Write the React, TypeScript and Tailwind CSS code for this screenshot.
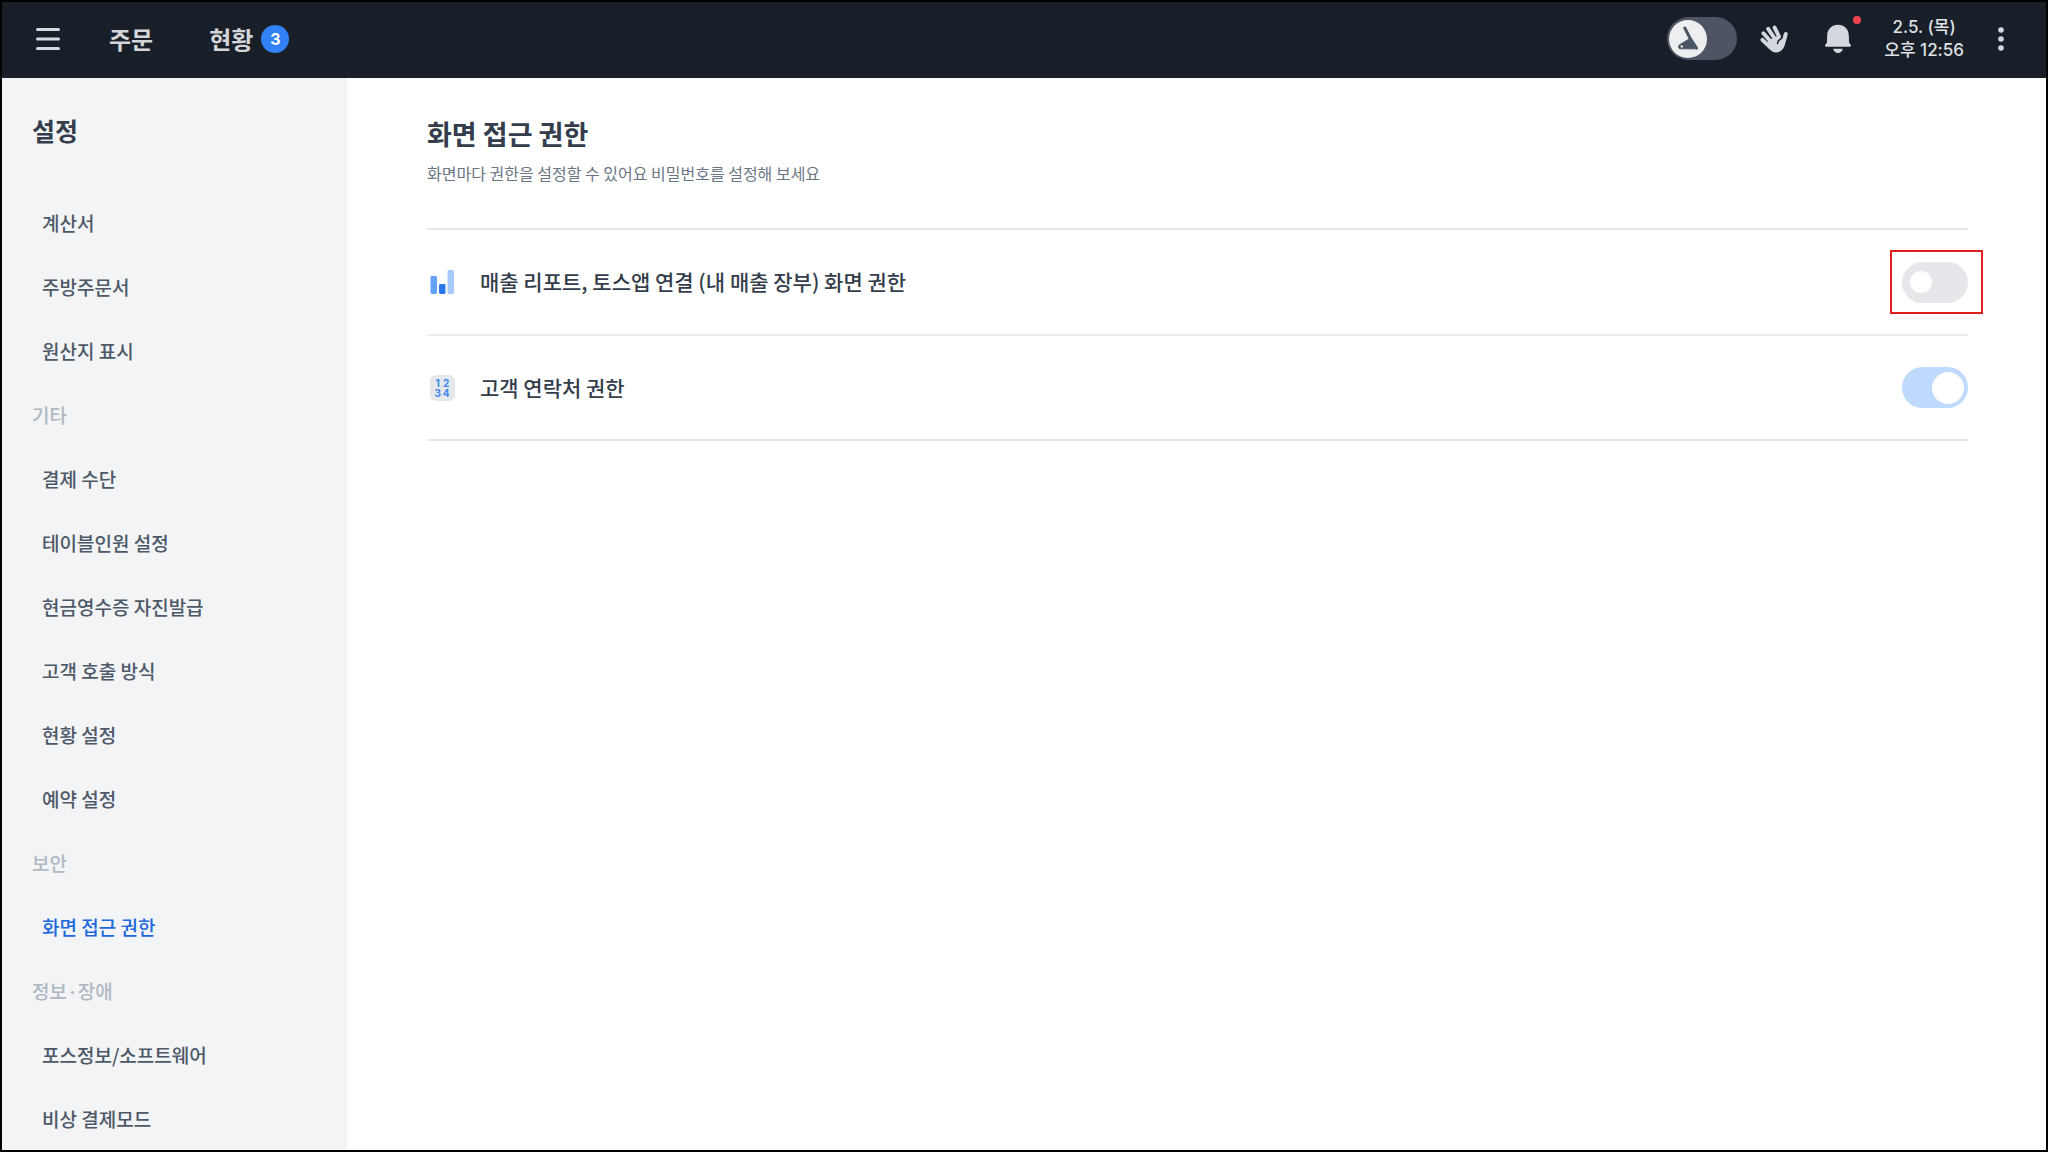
import { useState } from 'react';

type MenuEntry = { label: string; heading?: boolean; active?: boolean };

const MENU: MenuEntry[] = [
  { label: '계산서' },
  { label: '주방주문서' },
  { label: '원산지 표시' },
  { label: '기타', heading: true },
  { label: '결제 수단' },
  { label: '테이블인원 설정' },
  { label: '현금영수증 자진발급' },
  { label: '고객 호출 방식' },
  { label: '현황 설정' },
  { label: '예약 설정' },
  { label: '보안', heading: true },
  { label: '화면 접근 권한', active: true },
  { label: '정보·장애', heading: true },
  { label: '포스정보/소프트웨어' },
  { label: '비상 결제모드' },
];

function MenuIcon() {
  return (
    <svg viewBox="0 0 26 24" className="w-[26px] h-6" fill="#d6dbe2">
      <rect x="1" y="1" width="24" height="3" rx="1.5" />
      <rect x="1" y="10.5" width="24" height="3" rx="1.5" />
      <rect x="1" y="20" width="24" height="3" rx="1.5" />
    </svg>
  );
}

function HandIcon() {
  return (
    <svg viewBox="0 0 30 30" className="w-[30px] h-[30px]" fill="none" stroke="#d3d8df" strokeLinecap="round" strokeLinejoin="round">
      <path d="M3.4 15.800 11 23M4.4 9.2 13 19M9.2 4.800 16 15M15.600 3.600 20 12.500" strokeWidth="3.9" />
      <path d="M26.800 10 24 20" strokeWidth="4" />
      <path d="M10 17 19 12.500 22 16 25.500 15.500 25 20.500C24 25 20.500 28 16.500 27.700 13 27.400 11 25 8.500 21.500Z" fill="#d3d8df" strokeWidth="1.600" />
      <path d="M18.600 19.600C18.600 17.400 19.800 15.800 21.800 15" stroke="#191f28" strokeWidth="1.400" />
    </svg>
  );
}

function BellIcon() {
  return (
    <svg viewBox="0 0 28 30" className="w-7 h-[30px]" fill="#d3d8df">
      <path d="M14 .8C7.800.8 3.400 5.200 3.200 11.200L2.900 18.800 1.400 20.600C.700 21.600 1.200 22.800 2.400 22.800H25.600C26.800 22.800 27.300 21.600 26.600 20.600L25.100 18.800 24.800 11.200C24.600 5.200 20.200.8 14 .8Z" />
      <path d="M9.200 24.800H18.800C18.400 27.400 16.500 29 14 29 11.500 29 9.600 27.400 9.200 24.800Z" />
    </svg>
  );
}

function HornIcon() {
  return (
    <svg viewBox="0 0 38 38" className="w-[38px] h-[38px]">
      <path d="M15.800 8 20.600 17.500 27.500 28" stroke="#4a5563" strokeWidth="3" strokeLinecap="round" fill="none" />
      <path d="M20.200 19 28.600 28.800H11.500C10 28.800 9.400 28 9.700 27L10.200 25Z" fill="#4a5563" stroke="#4a5563" strokeLinejoin="round" />
      <circle cx="12.800" cy="26.400" r="1.200" fill="#eceef0" />
    </svg>
  );
}

function ChartIcon() {
  return (
    <svg viewBox="0 0 30 30" className="w-[30px] h-[30px]">
      <rect x="3.500" y="9" width="6.500" height="18" rx="1.400" fill="#64a2fa" />
      <rect x="12" y="17" width="6.500" height="10" rx="1.400" fill="#2a78ea" />
      <rect x="20.500" y="3" width="6.500" height="24" rx="1.400" fill="#a9cbfb" />
    </svg>
  );
}

function NumbersIcon() {
  return (
    <span className="flex w-[30px] justify-center">
      <span className="grid h-[26px] w-[25px] grid-cols-2 content-center justify-items-center rounded-md bg-[#e5e8eb] px-1 font-[Inter,sans-serif] text-[10px] leading-[10px] font-bold text-[#3b86f0]">
        <span>1</span>
        <span>2</span>
        <span>3</span>
        <span>4</span>
      </span>
    </span>
  );
}

function Header() {
  const [soundOn, setSoundOn] = useState(false);

  return (
    <header className="flex h-[76px] shrink-0 items-center bg-[#191f28] pb-[3px] pl-[33px] pr-10 text-[#d3d5d9]">
      <button aria-label="메뉴">
        <MenuIcon />
      </button>
      <nav className="ml-12 flex items-center gap-14 text-2xl font-bold">
        <a href="#order">주문</a>
        <a href="#status" className="flex items-center gap-2">
          현황
          <span className="flex size-7 items-center justify-center rounded-full bg-[#3182f6] font-[Inter,sans-serif] text-base font-bold text-white">3</span>
        </a>
      </nav>

      <div className="ml-auto flex items-center">
        <label className="relative flex h-[43px] w-[70px] cursor-pointer items-center rounded-full bg-[#4e5463] px-0.5">
          <input
            type="checkbox"
            aria-label="알림음"
            className="peer sr-only"
            checked={soundOn}
            onChange={(e) => setSoundOn(e.target.checked)}
          />
          <span className="rounded-full bg-[#eceef0] peer-checked:ml-auto">
            <HornIcon />
          </span>
        </label>
        <button aria-label="직원 호출" className="ml-[22px]">
          <HandIcon />
        </button>
        <button aria-label="알림" className="relative ml-[35px]">
          <BellIcon />
          <span className="absolute -top-2 -right-[9px] size-2 rounded-full bg-[#f04452]" />
        </button>
        <p className="ml-8 text-center font-[Inter,'Noto_Sans_CJK_KR',sans-serif] text-[17px] leading-[23px] font-medium text-[#dfe1e4]">
          2.5. (목)
          <br />
          오후 12:56
        </p>
        <button aria-label="더보기" className="ml-8">
          <svg viewBox="0 0 10 26" className="w-2.5 h-[26px]" fill="#d3d8df">
            <circle cx="5" cy="4" r="2.800" />
            <circle cx="5" cy="13" r="2.800" />
            <circle cx="5" cy="22" r="2.800" />
          </svg>
        </button>
      </div>
    </header>
  );
}

function Sidebar() {
  return (
    <aside className="w-[345px] shrink-0 overflow-hidden bg-[#f2f4f6]">
      <h2 className="pt-[34px] pl-[30px] text-[25px] leading-9 font-bold text-[#333d4b]">설정</h2>
      <ul className="mt-[43px] text-[19px] font-medium">
        {MENU.map((item) =>
          item.heading ? (
            <li key={item.label} className="flex h-16 items-center pl-[30px] text-[#b0b8c1]">
              {item.label}
            </li>
          ) : (
            <li key={item.label}>
              <a
                href="#"
                className={`flex h-16 items-center pl-10 ${item.active ? 'text-[#2068dc]' : 'text-[#4e5968]'}`}
              >
                {item.label}
              </a>
            </li>
          )
        )}
      </ul>
    </aside>
  );
}

export default function App() {
  const [reportLock, setReportLock] = useState(false);
  const [contactLock, setContactLock] = useState(true);

  return (
    <div className="flex h-screen flex-col overflow-hidden border-2 border-black bg-white font-['Noto_Sans_CJK_KR',sans-serif]">
      <Header />
      <div className="flex min-h-0 flex-1">
        <Sidebar />
        <main className="min-w-0 flex-1 px-20 pt-[38px] pr-[78px]">
          <h1 className="text-[27px] leading-9 font-bold text-[#333d4b]">화면 접근 권한</h1>
          <p className="mt-2 text-base leading-[26px] text-[#6b7684]">화면마다 권한을 설정할 수 있어요 비밀번호를 설정해 보세요</p>

          {/* Permission rows */}
          <div className="mt-[42px] border-t-2 border-b border-[#e5e8eb] text-[21px] font-medium text-[#333d4b]">
            <div className="flex h-[106px] items-center border-b-2 border-[#ebedf0]">
              <ChartIcon />
              <label htmlFor="report" className="ml-[23px]">
                매출 리포트, 토스앱 연결 (내 매출 장부) 화면 권한
              </label>
              <span className="-mr-[15px] ml-auto flex h-16 w-[93px] items-center border-2 border-[#e01e1e] pl-2.5">
                <label className="flex h-[41px] w-[66px] items-center rounded-full bg-[#e5e7eb] px-2 has-checked:bg-[#c0d9fe] has-checked:px-1">
                  <input
                    id="report"
                    type="checkbox"
                    className="peer sr-only"
                    checked={reportLock}
                    onChange={(e) => setReportLock(e.target.checked)}
                  />
                  <span className="size-[22px] rounded-full bg-white peer-checked:ml-auto peer-checked:size-8" />
                </label>
              </span>
            </div>
            <div className="flex h-[104px] items-center border-b border-[#e5e8eb]">
              <NumbersIcon />
              <label htmlFor="contact" className="ml-[23px]">
                고객 연락처 권한
              </label>
              <label className="ml-auto flex h-[41px] w-[66px] items-center rounded-full bg-[#e5e7eb] px-2 has-checked:bg-[#c0d9fe] has-checked:px-1">
                <input
                  id="contact"
                  type="checkbox"
                  className="peer sr-only"
                  checked={contactLock}
                  onChange={(e) => setContactLock(e.target.checked)}
                />
                <span className="size-[22px] rounded-full bg-white peer-checked:ml-auto peer-checked:size-8" />
              </label>
            </div>
          </div>
        </main>
      </div>
    </div>
  );
}
